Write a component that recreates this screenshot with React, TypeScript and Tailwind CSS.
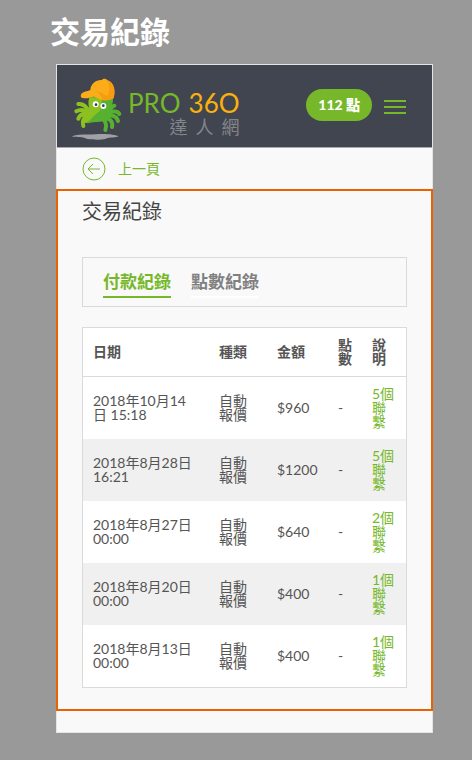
import React from 'react';

interface PaymentRecord {
  date: string;
  type: string;
  amount: string;
  points: string;
  note: string;
}

const records: PaymentRecord[] = [
  { date: '2018年10月14日 15:18', type: '自動報價', amount: '$960', points: '-', note: '5個聯繫' },
  { date: '2018年8月28日 16:21', type: '自動報價', amount: '$1200', points: '-', note: '5個聯繫' },
  { date: '2018年8月27日 00:00', type: '自動報價', amount: '$640', points: '-', note: '2個聯繫' },
  { date: '2018年8月20日 00:00', type: '自動報價', amount: '$400', points: '-', note: '1個聯繫' },
  { date: '2018年8月13日 00:00', type: '自動報價', amount: '$400', points: '-', note: '1個聯繫' },
];

const Mascot: React.FC = () => (
  <svg viewBox="0 0 180 204" className="w-15 h-[68px] shrink-0" aria-hidden="true">
    {/* Shadow */}
    <path d="M12 187C30 179 60 183 82 181C105 178 145 181 151 187C146 192 124 189 114 194C94 199 60 197 50 192C40 188 22 191 12 187Z" fill="#a0a1a5" />
    {/* Right arms */}
    <g fill="none" stroke="#58b031" strokeWidth="12" strokeLinecap="round">
      <path d="M100 128C122 124 126 98 139 95" />
      <path d="M104 126C128 110 148 108 154 120" />
      <path d="M104 128C130 120 146 126 150 141" />
      <path d="M100 130C124 130 136 142 132 159" />
      <path d="M98 132C112 138 118 152 112 168" />
    </g>
    {/* Body */}
    <path d="M64 70L134 66C138 84 131 98 123 109C119 116 127 120 132 124C126 130 122 134 116 144C104 140 96 144 84 144C70 144 62 150 52 146L48 128L66 112C62 98 60 84 64 70Z" fill="#58b031" />
    <path d="M64 70C60 84 62 98 66 112C56 116 50 110 46 106L40 122C46 128 44 138 50 148C66 144 80 120 96 111L103 72Z" fill="#8cc21f" />
    {/* Left arms */}
    <g fill="none" stroke="#8cc21f" strokeWidth="12" strokeLinecap="round">
      <path d="M64 118C58 98 44 88 31 90" />
      <path d="M60 118C48 106 36 106 25 112" />
      <path d="M58 122C46 118 36 122 31 134" />
      <path d="M58 128C46 132 42 142 46 156" />
    </g>
    {/* Cap */}
    <path d="M67 48C68 28 86 16 102 18C104 13 115 13 118 19C138 26 143 48 137 72C126 79 112 80 104 78C94 77 88 70 78 68C68 68 58 76 44 72C36 70 37 60 44 56C52 51 60 52 67 48Z" fill="#fbac18" />
    <path d="M67 48C86 47 98 58 104 78C114 80 128 78 137 72C143 48 138 26 118 19C125 34 127 52 118 66C106 62 92 48 67 48Z" fill="#f59c13" />
    {/* Eyes */}
    <circle cx="83" cy="91" r="9" fill="#fff" />
    <circle cx="106" cy="96" r="9" fill="#fff" />
    <circle cx="84" cy="92" r="4" fill="#30395b" />
    <circle cx="106" cy="95" r="4" fill="#30395b" />
  </svg>
);

const Header: React.FC = () => (
  <header className="flex h-[83px] items-center justify-between border-b border-[#a8aaad] bg-[#41454f] pl-[11px] pr-[26px]">
    <a href="#home" className="flex items-center pt-1">
      <Mascot />
      <span className="flex flex-col pt-2.5">
        <span className="flex gap-2 text-[26px] leading-7">
          <span className="text-[#76b82a]">PRO</span>
          <span className="text-[#fab20b]">36O</span>
        </span>
        <span className="flex justify-end gap-2 text-lg leading-5 text-[#83868c]">
          <span>達</span>
          <span>人</span>
          <span>網</span>
        </span>
      </span>
    </a>
    <div className="flex items-center gap-3 pb-0.5">
      <button className="h-8 rounded-full bg-[#76b82a] px-3 text-sm font-black whitespace-nowrap text-white">112 點</button>
      <button className="flex w-[22px] flex-col gap-1 pt-1" aria-label="Menu">
        <span className="h-0.5 w-full bg-[#76b82a]" />
        <span className="h-0.5 w-full bg-[#76b82a]" />
        <span className="h-0.5 w-full bg-[#76b82a]" />
      </button>
    </div>
  </header>
);

const RecordTable: React.FC = () => (
  <table className="mt-5 w-full table-fixed border-separate border-spacing-0 border border-[#dadada] bg-white text-left text-sm leading-[14px]">
    <colgroup>
      <col />
      <col className="w-[58px]" />
      <col className="w-[61px]" />
      <col className="w-[34px]" />
      <col className="w-11" />
    </colgroup>
    <thead>
      <tr>
        {['日期', '種類', '金額', '點數', '說明'].map((label) => (
          <th key={label} scope="col" className="border-b border-[#dadada] p-2.5 font-bold">{label}</th>
        ))}
      </tr>
    </thead>
    <tbody>
      {records.map((record) => (
        <tr key={record.date} className="even:bg-[#f0f0f0]">
          <td className="py-2.5 pl-2.5 pr-4">{record.date}</td>
          <td className="p-2.5">{record.type}</td>
          <td className="p-2.5">{record.amount}</td>
          <td className="p-2.5">{record.points}</td>
          <td className="p-2.5">
            <a href="#contacts" className="block text-[#76b82a]">{record.note}</a>
          </td>
        </tr>
      ))}
    </tbody>
  </table>
);

export default function App() {
  return (
    <div className="min-h-screen bg-[#999999] pb-[27px] pl-14 pr-[39px] font-['Lato','Noto_Sans_CJK_TC',sans-serif] text-[#555555]">
      <h1 className="-ml-1.5 flex h-16 items-center pb-0.5 text-3xl font-bold text-white">交易紀錄</h1>
      <div className="border border-[#e4e4e4] bg-[#f9f9f9] pb-[21px]">
        <Header />
        <div className="flex h-[41px] items-center pl-[25px]">
          <a href="#back" className="flex items-center gap-3 text-sm text-[#76b82a]">
            <svg viewBox="0 0 24 24" className="size-6" fill="none" stroke="currentColor" strokeWidth="1" aria-hidden="true">
              <circle cx="12" cy="12" r="11" />
              <path d="M18 12H6M11 7L6 12L11 17" />
            </svg>
            上一頁
          </a>
        </div>
        <main className="-mx-px border-2 border-[#eb6100] px-6 pt-1 pb-[21px]">
          <h2 className="text-xl leading-8 text-[#444444]">交易紀錄</h2>
          <nav className="mt-[30px] flex h-[50px] items-center gap-5 border border-[#dadada] px-5 pt-1 text-[17px] leading-6 font-bold">
            <button className="border-b-2 border-[#76b82a] pb-0.5 text-[#76b82a]">付款紀錄</button>
            <button className="border-b-2 border-white pb-0.5 text-[#808080]">點數紀錄</button>
          </nav>
          <RecordTable />
        </main>
      </div>
    </div>
  );
}
